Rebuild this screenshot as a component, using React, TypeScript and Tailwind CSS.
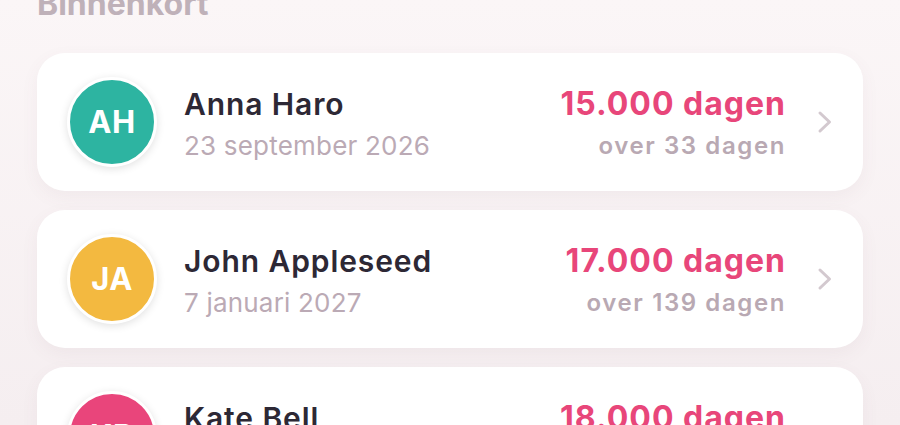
type Item = {
  initials: string;
  name: string;
  date: string;
  milestone: string;
  until: string;
  color: string;
};

const items: Item[] = [
  { initials: "AH", name: "Anna Haro", date: "23 september 2026", milestone: "15.000 dagen", until: "over 33 dagen", color: "bg-[#2db4a1]" },
  { initials: "JA", name: "John Appleseed", date: "7 januari 2027", milestone: "17.000 dagen", until: "over 139 dagen", color: "bg-[#f3b940]" },
  { initials: "KB", name: "Kate Bell", date: "2 maart 2029", milestone: "18.000 dagen", until: "over 923 dagen", color: "bg-[#e9457b]" },
];

function Chevron() {
  return (
    <svg width="16" height="24" viewBox="0 0 16 24" fill="none" className="ml-[31px] shrink-0">
      <path d="M3 3 L12.5 12 L3 21" stroke="#d3c9cf" strokeWidth="3" strokeLinecap="round" strokeLinejoin="round" />
    </svg>
  );
}

function Row({ item }: { item: Item }) {
  return (
    <div className="flex h-[138px] shrink-0 items-center rounded-[28px] bg-white pl-[30px] pr-[30px] shadow-[0_6px_18px_rgba(120,80,100,0.06)]">
      <div
        className={`flex h-[90px] w-[90px] shrink-0 items-center justify-center rounded-full border-[3px] border-white ${item.color} shadow-[0_2px_8px_rgba(0,0,0,0.12)]`}
      >
        <span className="text-[31px] font-bold tracking-[0.5px] text-white">{item.initials}</span>
      </div>
      <div className="ml-[27px] flex flex-1 flex-col pt-[4px]">
        <span className="text-[30px] font-semibold leading-[36px] tracking-[0.9px] text-[#2d2835]">{item.name}</span>
        <span className="mt-[8px] text-[26px] leading-[32px] tracking-[0.2px] text-[#bbaab5]">{item.date}</span>
      </div>
      <div className="flex flex-col items-end pt-[4px]">
        <span className="text-[32px] font-bold leading-[36px] tracking-[1px] text-[#e8467a]">{item.milestone}</span>
        <span className="mt-[8px] text-[24px] font-semibold leading-[32px] tracking-[1.6px] text-[#b9a9b3]">{item.until}</span>
      </div>
      <Chevron />
    </div>
  );
}

export default function App() {
  return (
    <div
      className="h-[425px] w-[900px] overflow-hidden bg-gradient-to-b from-[#fbf6f7] to-[#f5eef0]"
      style={{ fontFamily: "Inter, 'Noto Sans', sans-serif" }}
    >
      <div className="px-[37px]">
        <h2 className="-mt-[15px] text-[32px] font-bold leading-[38px] text-[#bfb1b9]">Binnenkort</h2>
        <div className="mt-[30px] flex flex-col gap-[19px]">
          {items.map((it) => (
            <Row key={it.name} item={it} />
          ))}
        </div>
      </div>
    </div>
  );
}
